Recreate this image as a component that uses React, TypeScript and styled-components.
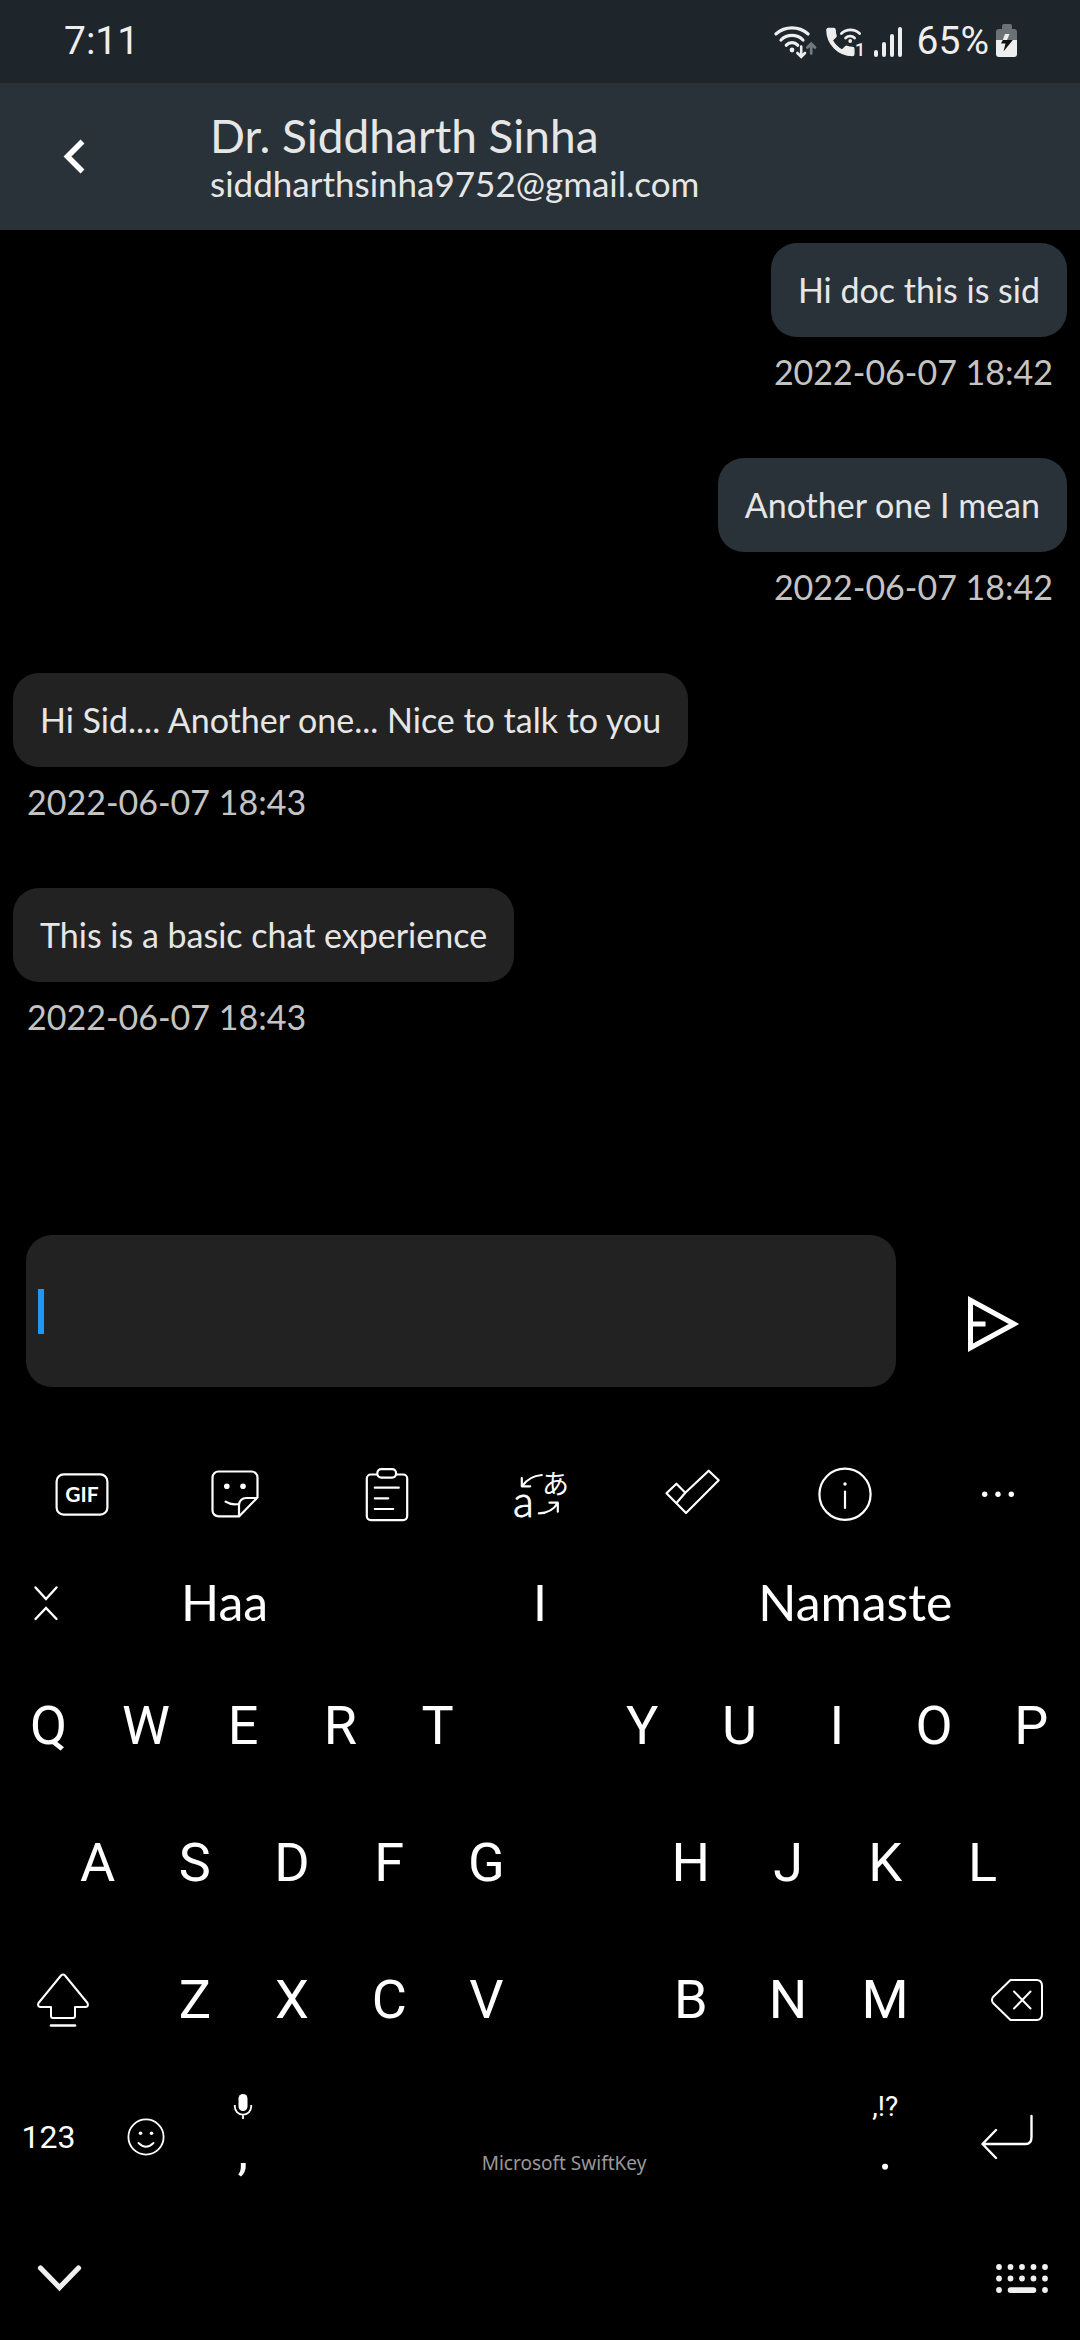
import React from "react";
import styled, { createGlobalStyle } from "styled-components";

const GlobalStyle = createGlobalStyle`
  *, *::before, *::after { box-sizing: border-box; }
  body { margin: 0; background: #000; }
  button, input { font: inherit; color: inherit; }
  svg { display: block; flex: none; }
`;

const chatFont = `Lato, "Noto Sans", sans-serif`;
const systemFont = `Roboto, "Open Sans", sans-serif`;

const Screen = styled.div`
  display: flex;
  flex-direction: column;
  min-height: 100vh;
  background: #000;
  color: #fff;
  font-family: ${chatFont};
`;

const StatusBar = styled.div`
  display: flex;
  align-items: center;
  justify-content: space-between;
  height: 83px;
  padding: 0 62px 2px 64px;
  background: #1e252b;
  color: #eee;
  font: 400 39px/48px ${systemFont};
`;

const StatusIcons = styled.div`
  display: flex;
  align-items: center;
  gap: 6px;
`;

const Percent = styled.span`
  padding-left: 7px;
`;

const Header = styled.header`
  display: flex;
  align-items: center;
  height: 147px;
  background: #283238;
  color: #e6e6e6;
`;

const BackButton = styled.button`
  display: flex;
  align-items: center;
  justify-content: center;
  width: 147px;
  height: 147px;
  padding: 0;
  border: 0;
  background: none;
`;

const Contact = styled.div`
  padding-left: 63px;
`;

const ContactName = styled.h1`
  margin: 0;
  font-size: 46px;
  font-weight: 400;
  line-height: 52px;
`;

const ContactMail = styled.p`
  margin: 0;
  font-size: 35px;
  line-height: 42px;
`;

const Messages = styled.main`
  display: flex;
  flex: 1;
  flex-direction: column;
  gap: 65px;
  padding: 13px;
`;

const Message = styled.article<{ $mine: boolean }>`
  display: flex;
  flex-direction: column;
  align-items: ${(p) => (p.$mine ? "flex-end" : "flex-start")};
  gap: 14px;
`;

const Bubble = styled.p<{ $mine: boolean }>`
  margin: 0;
  padding: 26px 27px;
  border-radius: 26px;
  background: ${(p) => (p.$mine ? "#283238" : "#222")};
  color: #e6e6e6;
  font-size: 34px;
  line-height: 42px;
`;

const Time = styled.time`
  padding: 0 14px;
  color: #c4c4c4;
  font-size: 34px;
  line-height: 42px;
`;

const Composer = styled.form`
  display: flex;
  padding: 0 0 54px 26px;
`;

const Field = styled.label`
  display: flex;
  flex: 1;
  align-items: center;
  height: 152px;
  padding: 0 12px;
  border-radius: 26px;
  background: #222;
`;

const Caret = styled.span`
  width: 6px;
  height: 45px;
  background: #2196f3;
`;

const FieldInput = styled.input`
  flex: 1;
  min-width: 0;
  border: 0;
  outline: 0;
  background: none;
  font-size: 34px;
  caret-color: transparent;
`;

const SendButton = styled.button`
  display: flex;
  align-items: center;
  justify-content: center;
  width: 184px;
  padding: 26px 0 0 10px;
  border: 0;
  background: none;
`;

const Keyboard = styled.section`
  font-family: ${systemFont};
`;

const Toolbar = styled.div`
  display: grid;
  grid-template-columns: repeat(7, 1fr);
  height: 106px;
  padding: 0 6px;
`;

const IconButton = styled.button`
  display: flex;
  align-items: center;
  justify-content: center;
  padding: 0;
  border: 0;
  background: none;
`;

const Suggestions = styled.div`
  display: grid;
  grid-template-columns: 67px repeat(3, 1fr) 67px;
  height: 110px;
`;

const CollapseButton = styled(IconButton)`
  padding-left: 24px;
`;

const Suggestion = styled.button`
  padding: 0;
  border: 0;
  background: none;
  font: 400 50px/60px ${chatFont};
`;

const KeyRow = styled.div<{ $inset?: number }>`
  display: flex;
  height: 137px;
  padding: 0 ${(p) => p.$inset ?? 0}px;
`;

const Key = styled.button<{ $grow?: number; $small?: boolean }>`
  display: flex;
  flex: ${(p) => p.$grow ?? 97} 1 0;
  align-items: center;
  justify-content: center;
  min-width: 0;
  padding: 0;
  border: 0;
  background: none;
  font-size: ${(p) => (p.$small ? 32 : 54)}px;
  line-height: 64px;
`;

const EdgeIcon = styled.span<{ $side: "left" | "right" }>`
  padding: ${(p) => (p.$side === "left" ? "0 20px 0 0" : "0 0 0 20px")};
`;

const SplitGap = styled.span`
  flex: 107 1 0;
`;

const StackedKey = styled(Key)`
  flex-direction: column;
  justify-content: space-between;
  padding: 24px 0 30px;
`;

const Hint = styled.span`
  font-size: 28px;
  line-height: 30px;
`;

const Mark = styled.span`
  font-size: 54px;
  line-height: 48px;
`;

const SpaceKey = styled(Key)`
  align-items: flex-end;
  padding-bottom: 28px;
  color: #999;
  font: 400 19px/28px "Noto Sans", "Open Sans", sans-serif;
`;

const NavBar = styled.nav`
  display: flex;
  align-items: center;
  justify-content: space-between;
  height: 135px;
  padding: 12px 31px 0 36px;
`;

const WifiIcon = () => (
  <svg width="46" height="38" viewBox="0 0 46 38" fill="none" stroke="#eee" strokeWidth="3.2" strokeLinecap="round">
    <path d="M2.9 12A24.5 24.5 0 0 1 35.1 12M8 18A15.4 15.4 0 0 1 30 18M13.3 23.2A7.7 7.7 0 0 1 24.7 23.2" />
    <circle cx="19" cy="28" r="2.4" fill="#eee" stroke="none" />
    <path d="M28.2 24.5v10M24.4 31l3.8 3.8L32 31" strokeWidth="2.6" />
    <path d="M38.2 31.5v-9M34.4 25.5l3.8-3.8 3.8 3.8" strokeWidth="2.8" stroke="#74797c" />
  </svg>
);

const WifiCallIcon = () => (
  <svg width="41" height="38" viewBox="0 0 41 38" fill="#eee">
    <path
      transform="translate(-2.6 2) scale(1.5)"
      stroke="#eee"
      strokeWidth="0.9"
      d="M6.6 10.8c1.4 2.8 3.8 5.1 6.6 6.6l2.2-2.2c.3-.3.7-.4 1-.2 1.1.4 2.3.6 3.6.6.6 0 1 .4 1 1V20c0 .6-.4 1-1 1-9.4 0-17-7.6-17-17 0-.6.4-1 1-1h3.5c.6 0 1 .4 1 1 0 1.3.2 2.5.6 3.6.1.3 0 .7-.2 1z"
    />
    <path
      d="M16.4 11.5A13.5 13.5 0 0 1 34.6 11.5M20.6 16A6.5 6.5 0 0 1 29.6 16"
      fill="none"
      stroke="#eee"
      strokeWidth="2.8"
      strokeLinecap="round"
    />
    <circle cx="25.2" cy="19" r="1.9" />
    <text x="30" y="34" fontFamily="Roboto, sans-serif" fontSize="18" fontWeight="500">1</text>
  </svg>
);

const SignalIcon = () => (
  <svg width="32" height="38" viewBox="0 0 32 38" stroke="#eee" strokeWidth="4" strokeLinecap="round">
    <path d="M4 30v3M12 22v11M20 14v19M28 7v26" />
  </svg>
);

const BatteryIcon = () => (
  <svg width="23" height="35" viewBox="0 0 23 35">
    <path d="M1 17V9q0-3 3-3h3V3q0-2 2-2h6q2 0 2 2v3h2q3 0 3 3v8z" fill="#6c7174" />
    <path d="M1 17h21v14q0 3-3 3H4q-3 0-3-3z" fill="#eee" />
    <path d="M10 11h4.5L12 17H7.8z" fill="#eee" />
    <path d="M7.8 17h10L8.5 28.500l2-8H6z" fill="#111" />
  </svg>
);

const BackIcon = () => (
  <svg width="24" height="40" viewBox="0 0 24 40" fill="none" stroke="#fff" strokeWidth="5.6">
    <path d="M20.5 4.5l-15 15 15 15" />
  </svg>
);

const SendIcon = () => (
  <svg width="56" height="60" viewBox="0 0 56 60" fill="none" stroke="#fff" strokeWidth="5">
    <path d="M5.5 6.3v47.4L49 30zM5.5 30h15" />
  </svg>
);

const ToolIcon = ({ children }: { children: React.ReactNode }) => (
  <svg
    width="70"
    height="70"
    viewBox="-5 -5 70 70"
    fill="none"
    stroke="#fff"
    strokeWidth="2.2"
    strokeLinecap="round"
    strokeLinejoin="round"
  >
    {children}
  </svg>
);

const tools = [
  {
    label: "GIF",
    art: (
      <>
        <rect x="4.6" y="10.4" width="50.8" height="40.2" rx="7" />
        <text x="30" y="38" textAnchor="middle" fill="#fff" stroke="none" fontFamily="Lato, sans-serif" fontSize="21" fontWeight="700">
          GIF
        </text>
      </>
    ),
  },
  {
    label: "Stickers",
    art: (
      <>
        <path d="M34 52.4H13.5a6 6 0 0 1-6-6V13.5a6 6 0 0 1 6-6h33a6 6 0 0 1 6 6v20zM34 52V41a7 7 0 0 1 7-7h11M20.6 37.7q5.4 3.6 13 2.3" />
        <g fill="#fff" stroke="none">
          <circle cx="21.8" cy="22.3" r="2.8" />
          <circle cx="38" cy="22.3" r="2.8" />
        </g>
      </>
    ),
  },
  {
    label: "Clipboard",
    art: (
      <>
        <rect x="9.8" y="10.5" width="40.4" height="45.6" rx="4" />
        <rect x="20.3" y="5.2" width="18.8" height="8.4" rx="4" fill="#000" />
        <path d="M17.8 23.7h24M17.8 34.3h13.4M17.8 45h18.4" />
      </>
    ),
  },
  {
    label: "Translate",
    art: (
      <>
        <path d="M31.8 11Q19 12 12 22.3M11.8 14v8.3h8.4M28.8 49.3Q42 49 47.8 38.7M39.5 38.7h8.3v9" />
        <g fill="#fff">
          <text x="3" y="53" strokeWidth="0.8" fontFamily="Lato, sans-serif" fontSize="43" fontWeight="300">a</text>
          <text x="32" y="30" stroke="none" fontFamily="Noto Sans CJK JP, sans-serif" fontSize="27">あ</text>
        </g>
      </>
    ),
  },
  {
    label: "Tasks",
    art: <path d="M3.5 29.3l9.9-9.6 8.9 9 23.4-22 10 9.6L23 49zM22.3 28.7l-8.6 10" />,
  },
  {
    label: "Information",
    art: (
      <>
        <circle cx="30" cy="30.3" r="25.6" />
        <path d="M30 27.5V44" />
        <circle cx="30" cy="20" r="1.7" fill="#fff" stroke="none" />
      </>
    ),
  },
  {
    label: "More",
    art: (
      <g fill="#fff" stroke="none">
        <circle cx="16.7" cy="30.3" r="2.7" />
        <circle cx="30" cy="30.3" r="2.7" />
        <circle cx="43.3" cy="30.3" r="2.7" />
      </g>
    ),
  },
];

const CollapseIcon = () => (
  <svg width="26" height="38" viewBox="0 0 26 38" fill="none" stroke="#fff" strokeWidth="2.4" strokeLinecap="round">
    <path d="M2.5 4.5L13 16 23.5 4.5M2.5 36L13 25l10.5 11" />
  </svg>
);

const ShiftIcon = () => (
  <svg width="54" height="56" viewBox="0 0 54 56" fill="none" stroke="#fff" strokeWidth="2" strokeLinecap="round" strokeLinejoin="round">
    <path d="M25 3.5q2-2 4 0L51.500 31q1.500 3.500-2 4H39v9q0 2-2 2H17q-2 0-2-2v-9H4.500q-3.500-.5-2-4z" />
    <path d="M15 53.5h24" strokeWidth="2.6" />
  </svg>
);

const DeleteIcon = () => (
  <svg width="54" height="44" viewBox="0 0 54 44" fill="none" stroke="#fff" strokeWidth="2" strokeLinecap="round" strokeLinejoin="round">
    <path d="M20.5 2h26q5.500 0 5.500 6v28q0 6-5.500 6h-26L3 25q-2-3 0-6z" />
    <path d="M24 13.5l16.500 17M40.500 13.500L24 30.500" />
  </svg>
);

const EmojiIcon = () => (
  <svg width="40" height="40" viewBox="0 0 40 40" fill="none" stroke="#fff" strokeWidth="1.8" strokeLinecap="round">
    <circle cx="20" cy="20" r="17.6" />
    <path d="M12.5 26q7.500 7.500 15 0" />
    <g fill="#fff" stroke="none">
      <circle cx="14.5" cy="16.3" r="1.8" />
      <circle cx="25.5" cy="16.3" r="1.8" />
    </g>
  </svg>
);

const MicIcon = () => (
  <svg width="20" height="30" viewBox="0 0 20 30" fill="none" stroke="#fff" strokeWidth="1.8">
    <rect x="5.5" y="2" width="9" height="17" rx="4.5" fill="#fff" stroke="none" />
    <path d="M1.8 13v1.500a8.200 8.200 0 0 0 16.400 0V13M10 22.500V27" />
  </svg>
);

const EnterIcon = () => (
  <svg width="54" height="46" viewBox="0 0 54 46" fill="none" stroke="#fff" strokeWidth="2.4" strokeLinecap="round" strokeLinejoin="round">
    <path d="M51.5 2v21q0 7-6 7H2.500M16 16L2.500 30 16 44" />
  </svg>
);

const HideIcon = () => (
  <svg width="46" height="30" viewBox="0 0 46 30" fill="none" stroke="#f0f0f0" strokeWidth="5.2" strokeLinecap="round">
    <path d="M4.5 4l19 19.500L42.500 4" />
  </svg>
);

const dotColumns = [0, 1, 2, 3, 4];

const LayoutIcon = () => (
  <svg width="54" height="32" viewBox="0 0 54 32" fill="#f0f0f0">
    {dotColumns.map((i) => (
      <React.Fragment key={i}>
        <circle cx={4 + i * 11.5} cy="4" r="2.9" />
        <circle cx={4 + i * 11.5} cy="15.5" r="2.9" />
      </React.Fragment>
    ))}
    <circle cx="4" cy="27" r="2.9" />
    <circle cx="50" cy="27" r="2.9" />
    <rect x="12.7" y="24.2" width="28.6" height="5.8" rx="2.9" />
  </svg>
);

const messages = [
  { text: "Hi doc this is sid", time: "2022-06-07 18:42", mine: true },
  { text: "Another one I mean", time: "2022-06-07 18:42", mine: true },
  { text: "Hi Sid.... Another one... Nice to talk to you", time: "2022-06-07 18:43", mine: false },
  { text: "This is a basic chat experience", time: "2022-06-07 18:43", mine: false },
];

const letters = (row: string) => row.split("").map((c) => <Key key={c}>{c}</Key>);

export default function App() {
  return (
    <Screen>
      <GlobalStyle />
      <StatusBar>
        <span>7:11</span>
        <StatusIcons>
          <WifiIcon />
          <WifiCallIcon />
          <SignalIcon />
          <Percent>65%</Percent>
          <BatteryIcon />
        </StatusIcons>
      </StatusBar>
      <Header>
        <BackButton aria-label="Back">
          <BackIcon />
        </BackButton>
        <Contact>
          <ContactName>Dr. Siddharth Sinha</ContactName>
          <ContactMail>siddharthsinha9752@gmail.com</ContactMail>
        </Contact>
      </Header>
      <Messages>
        {messages.map((m) => (
          <Message key={m.text} $mine={m.mine}>
            <Bubble $mine={m.mine}>{m.text}</Bubble>
            <Time>{m.time}</Time>
          </Message>
        ))}
      </Messages>
      <Composer onSubmit={(e) => e.preventDefault()}>
        <Field>
          <Caret />
          <FieldInput type="text" aria-label="Message" />
        </Field>
        <SendButton type="submit" aria-label="Send">
          <SendIcon />
        </SendButton>
      </Composer>
      <Keyboard aria-label="Keyboard">
        <Toolbar>
          {tools.map((t) => (
            <IconButton key={t.label} aria-label={t.label}>
              <ToolIcon>{t.art}</ToolIcon>
            </IconButton>
          ))}
        </Toolbar>
        <Suggestions>
          <CollapseButton aria-label="Collapse">
            <CollapseIcon />
          </CollapseButton>
          <Suggestion>Haa</Suggestion>
          <Suggestion>I</Suggestion>
          <Suggestion>Namaste</Suggestion>
        </Suggestions>
        <KeyRow>
          {letters("QWERT")}
          <SplitGap />
          {letters("YUIOP")}
        </KeyRow>
        <KeyRow $inset={49}>
          {letters("ASDFG")}
          <SplitGap />
          {letters("HJKL")}
        </KeyRow>
        <KeyRow>
          <Key $grow={146} aria-label="Shift">
            <EdgeIcon $side="left">
              <ShiftIcon />
            </EdgeIcon>
          </Key>
          {letters("ZXCV")}
          <SplitGap />
          {letters("BNM")}
          <Key $grow={146} aria-label="Delete">
            <EdgeIcon $side="right">
              <DeleteIcon />
            </EdgeIcon>
          </Key>
        </KeyRow>
        <KeyRow>
          <Key $small>123</Key>
          <Key aria-label="Emoji">
            <EmojiIcon />
          </Key>
          <StackedKey>
            <MicIcon />
            <Mark>,</Mark>
          </StackedKey>
          <SpaceKey $grow={545}>Microsoft SwiftKey</SpaceKey>
          <StackedKey>
            <Hint>,!?</Hint>
            <Mark>.</Mark>
          </StackedKey>
          <Key $grow={146} aria-label="Enter">
            <EnterIcon />
          </Key>
        </KeyRow>
        <NavBar>
          <IconButton aria-label="Hide keyboard">
            <HideIcon />
          </IconButton>
          <IconButton aria-label="Switch keyboard">
            <LayoutIcon />
          </IconButton>
        </NavBar>
      </Keyboard>
    </Screen>
  );
}
